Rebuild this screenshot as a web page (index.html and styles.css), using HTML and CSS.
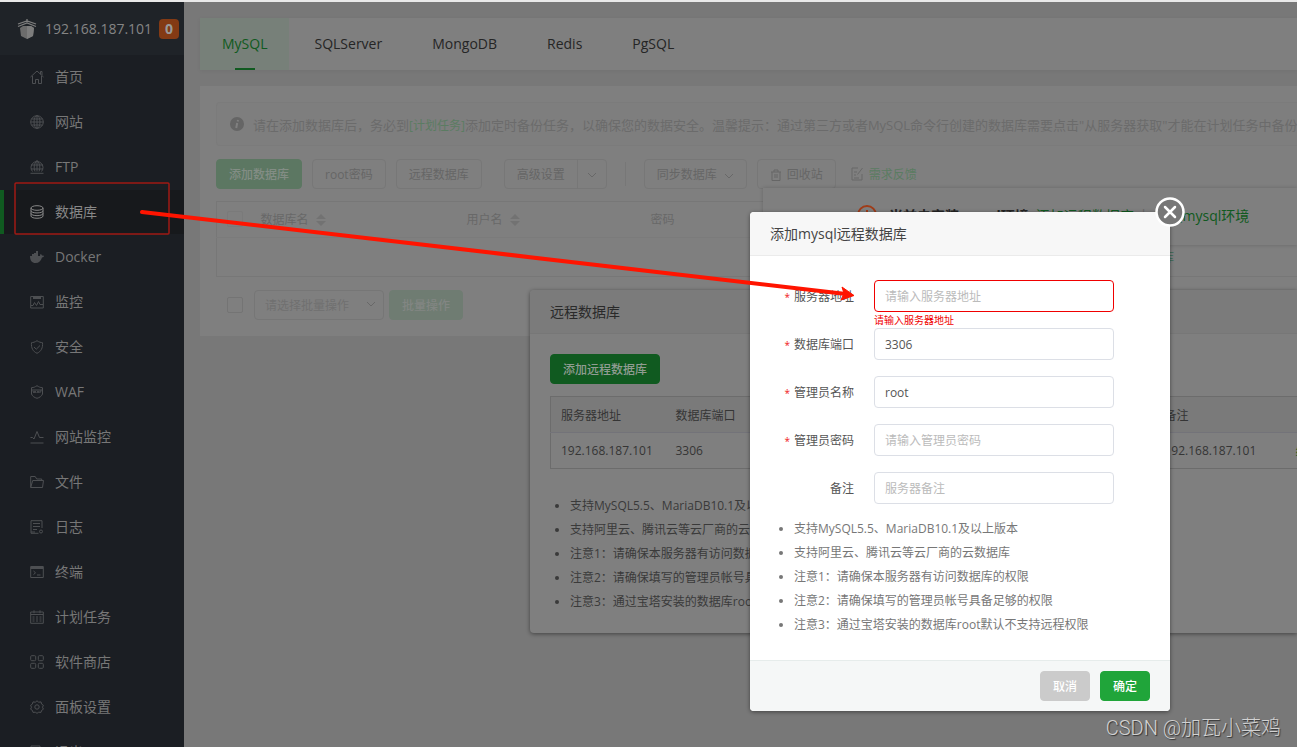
FILE: index.html
```html
<!DOCTYPE html>
<html lang="zh-CN">
<head>
<meta charset="utf-8">
<title>数据库</title>
<link rel="stylesheet" href="styles.css">
</head>
<body>
<div class="app">
  <aside class="sidebar">
    <div class="brand">
      <svg class="brand-logo" viewBox="0 0 20 20"><path d="M10 0v3M1 5l9-3 9 3M1 7.500l9-3.500 9 3.500" fill="none" stroke="#7d7d7d" stroke-width="1.300"/><path d="M3 9l3-2h8l3 2-1 8-6 3-6-3z" fill="#6c6c6c"/><path d="M10 7h4l3 2-1 8-6 3z" fill="#7d7d7d"/></svg>
      <span class="brand-ip">192.168.187.101</span>
      <span class="brand-badge">0</span>
    </div>
    <nav class="menu">
      <a class="menu-item" href="#"><svg class="icon" viewBox="0 0 14 14"><path d="M.5 7L7 1l6.500 6M2.500 6v7.500h3v-4h3v4h3V6M10.500 4V1.500h1.500V5"/></svg>首页</a>
      <a class="menu-item" href="#"><svg class="icon" viewBox="0 0 14 14"><circle cx="7" cy="7" r="6.300"/><ellipse cx="7" cy="7" rx="3" ry="6.300"/><path d="M7 .7v12.600M.7 7h12.600M1.500 4h11M1.500 10h11"/></svg>网站</a>
      <a class="menu-item" href="#"><svg class="icon" viewBox="0 0 14 14"><path d="M2.500 11.500a6 6 0 1 1 9 0M5 11.500c-1.500-4-1-8 2-11 3 3 3.500 7 2 11M7 .5v11M1 5h12M1 9h12M.5 13.300h13"/></svg>FTP</a>
      <a class="menu-item active" href="#"><svg class="icon" viewBox="0 0 14 14"><ellipse cx="7" cy="3" rx="6" ry="2.300"/><path d="M1 3v8c0 3 12 3 12 0V3M1 5.700c0 3 12 3 12 0M1 8.400c0 3 12 3 12 0"/></svg>数据库</a>
      <a class="menu-item" href="#"><svg class="icon solid" viewBox="0 0 14 14"><path d="M0 6h2V4h2V3h2V1h2v5h2c0-2 1-2 1-2l1 1.500 2 .2c0 1-1 1.500-2 1.800C11 11 9 13 5.500 13 2 13 0 10.500 0 6z"/></svg>Docker</a>
      <a class="menu-item" href="#"><svg class="icon" viewBox="0 0 14 14"><path d="M.7 1.500h12.600v11.500H.7zM3 2.500h8M3 3.500h8M1 10.500h2l1.500-3 2 3 2-4 1.500 3h3"/></svg>监控</a>
      <a class="menu-item" href="#"><svg class="icon" viewBox="0 0 14 14"><path d="M7 .7c2 1.500 4 1.800 5.500 2C13 8 11 11.500 7 13.300 3 11.500 1 8 1.500 2.700 3 2.500 5 2.200 7 .7zM4 7l2.300 2.200L10 5.500"/></svg>安全</a>
      <a class="menu-item" href="#"><svg class="icon" viewBox="0 0 14 14"><path d="M1.500 5V2.700C4 2.500 5 2 7 .7c2 1.300 3 1.800 5.500 2V5M1.500 9c1 2.500 3 3.500 5.500 4.300C9.500 12.500 11.500 11.500 12.500 9M1.500 5h11M3 6l1 2 1-2 1 2M7 8l1-2 1 2M10 8V6h1.500M1.500 5v4M12.500 5v4"/></svg>WAF</a>
      <a class="menu-item" href="#"><svg class="icon" viewBox="0 0 14 14"><path d="M.5 7.500h2l1.500 1.500L7 1.500l2.500 6h4M.5 13h13"/></svg>网站监控</a>
      <a class="menu-item" href="#"><svg class="icon" viewBox="0 0 14 14"><path d="M.7 12.500v-11h4.500l1.500 2.500h5v1.500M.7 12.500l2-7h10.800l-1 7z"/></svg>文件</a>
      <a class="menu-item" href="#"><svg class="icon" viewBox="0 0 14 14"><path d="M8.500 13.300H1V.7h11V8M3 3.500h7M3 6.500h7M3 9.500h4M1 12h4"/><circle cx="11" cy="11.500" r="1.500"/></svg>日志</a>
      <a class="menu-item" href="#"><svg class="icon" viewBox="0 0 14 14"><path d="M.7 1.500h12.600v11H.7zM.7 2.500h12.600M.7 3.500h12.600M3.500 6l2 1.800-2 1.800M7 10h3.500"/></svg>终端</a>
      <a class="menu-item" href="#"><svg class="icon" viewBox="0 0 14 14"><path d="M.7 2h12.600v11.300H.7zM.7 4.500h12.600M4 .3v3M10 .3v3M2.500 7h2M6 7h2M9.500 7h2M2.500 9h2M6 9h2M9.500 9h2M2.500 11h2M6 11h2M9.500 11h2"/></svg>计划任务</a>
      <a class="menu-item" href="#"><svg class="icon" viewBox="0 0 14 14"><rect x=".7" y=".7" width="5" height="5" rx="1"/><rect x="8.300" y=".7" width="5" height="5" rx="1"/><rect x=".7" y="8.300" width="5" height="5" rx="1"/><rect x="8.300" y="8.300" width="5" height="5" rx="1"/></svg>软件商店</a>
      <a class="menu-item" href="#"><svg class="icon" viewBox="0 0 14 14"><path d="M5.300 2.200L7 .8l1.700 1.400 2.300-.3.600 2.200 1.800 1.200-.9 1.900.9 2-1.800 1.200-.6 2-2.300-.2L7 13.300l-1.700-1.100-2.300.2-.6-2L.6 9.200l.9-2-.9-1.900 1.800-1.200.6-2.200z"/><circle cx="7" cy="7" r="2.200"/></svg>面板设置</a>
      <a class="menu-item" href="#"><svg class="icon" viewBox="0 0 14 14"><path d="M10 4V1H1v12h9v-3M5 7h8"/></svg>退出</a>
    </nav>
  </aside>

  <main class="main">
    <nav class="tabs">
      <a class="tab active" href="#">MySQL</a>
      <a class="tab" href="#">SQLServer</a>
      <a class="tab" href="#">MongoDB</a>
      <a class="tab" href="#">Redis</a>
      <a class="tab" href="#">PgSQL</a>
    </nav>
    <section class="panel">
      <p class="notice">
        <svg class="notice-icon" viewBox="0 0 14 14"><circle cx="7" cy="7" r="7" fill="#656565"/><path d="M8 3L7.700 4.500M7.200 6l-1 5" stroke="#808080" stroke-width="2"/></svg>
        <span>请在添加数据库后，务必到<a class="notice-link" href="#">[计划任务]</a>添加定时备份任务，以确保您的数据安全。温馨提示：通过第三方或者MySQL命令行创建的数据库需要点击"从服务器获取"才能在计划任务中备份</span>
      </p>
      <div class="toolbar">
        <button class="btn btn-green">添加数据库</button>
        <button class="btn">root密码</button>
        <button class="btn">远程数据库</button>
        <div class="split">
          <button class="btn split-main">高级设置</button>
          <button class="btn split-arrow" aria-label="更多"><svg class="chevron" viewBox="0 0 10 6"><path d="M1 1l4 4 4-4"/></svg></button>
        </div>
        <span class="divider"></span>
        <button class="btn sync">同步数据库<svg class="chevron" viewBox="0 0 10 6"><path d="M1 1l4 4 4-4"/></svg></button>
        <button class="btn recycle"><svg class="tool-icon" viewBox="0 0 12 12"><path d="M1 3h10M4 3V1h4v2M2 3v8.500h8V3M5 5v4M7 5v4"/></svg>回收站</button>
        <a class="feedback" href="#"><svg class="feedback-icon" viewBox="0 0 14 14"><path d="M8 1H2v12h10V7M4 5h3M4 8h2M7.500 7.500L12.500 1M4 11h5"/></svg>需求反馈</a>
      </div>
      <table class="db-table">
        <colgroup><col class="c-check"><col class="c-name"><col class="c-user"><col></colgroup>
        <thead>
          <tr>
            <th><input class="check faint" type="checkbox" aria-label="全选"></th>
            <th>数据库名<svg class="sort" viewBox="0 0 10 12"><path d="M5 0l5 5H0zM5 12l5-5H0z"/></svg></th>
            <th>用户名<svg class="sort" viewBox="0 0 10 12"><path d="M5 0l5 5H0zM5 12l5-5H0z"/></svg></th>
            <th>密码</th>
          </tr>
        </thead>
        <tbody><tr><td colspan="4" class="empty"><a class="empty-link" href="#">添加数据库</a></td></tr></tbody>
      </table>
      <div class="batch">
        <input class="check" type="checkbox" aria-label="选择全部">
        <div class="select-wrap">
          <select class="select" aria-label="批量操作"><option>请选择批量操作</option></select>
          <svg class="chevron select-chevron" viewBox="0 0 10 6"><path d="M1 1l4 4 4-4"/></svg>
        </div>
        <button class="btn btn-pale">批量操作</button>
      </div>
    </section>
  </main>

  <div class="env-tip">
    <svg class="env-icon" viewBox="0 0 20 20"><circle cx="10" cy="10" r="9"/><path d="M10 5v6M10 13v2"/></svg>
    <strong>当前未安装mysql环境,</strong>
    <a class="env-link" href="#">添加远程数据库</a>
    <span class="env-sep">|</span>
    <a class="env-link" href="#">安装mysql环境</a>
  </div>

  <section class="dialog remote">
    <h2 class="dialog-title">远程数据库</h2>
    <div class="remote-body">
      <button class="btn btn-add">添加远程数据库</button>
      <table class="remote-table">
        <colgroup><col class="r-addr"><col class="r-port"><col class="r-user"><col class="r-pass"><col class="r-note"><col></colgroup>
        <thead><tr><th>服务器地址</th><th>数据库端口</th><th>管理员名称</th><th>管理员密码</th><th>备注</th><th></th></tr></thead>
        <tbody><tr><td>192.168.187.101</td><td>3306</td><td></td><td></td><td>192.168.187.101</td><td><a class="env-link" href="#">编辑</a></td></tr></tbody>
      </table>
      <ul class="tips">
        <li>支持MySQL5.5、MariaDB10.1及以上版本</li>
        <li>支持阿里云、腾讯云等云厂商的云数据库</li>
        <li>注意1：请确保本服务器有访问数据库的权限</li>
        <li>注意2：请确保填写的管理员帐号具备足够的权限</li>
        <li>注意3：通过宝塔安装的数据库root默认不支持远程权限</li>
      </ul>
    </div>
  </section>

  <form class="dialog add">
    <h2 class="dialog-title">添加mysql远程数据库</h2>
    <button class="close" type="button" aria-label="关闭"><svg viewBox="0 0 30 30"><circle cx="15" cy="15" r="13.500" fill="#777" stroke="#fff" stroke-width="2.500"/><path d="M10 10l10 10M20 10L10 20" stroke="#fff" stroke-width="2.500" stroke-linecap="round"/></svg></button>
    <div class="fields">
      <div class="field"><label class="label required" for="host">服务器地址</label><input class="input invalid" id="host" placeholder="请输入服务器地址"><span class="error">请输入服务器地址</span></div>
      <div class="field"><label class="label required" for="port">数据库端口</label><input class="input" id="port" value="3306"></div>
      <div class="field"><label class="label required" for="user">管理员名称</label><input class="input" id="user" value="root"></div>
      <div class="field"><label class="label required" for="pass">管理员密码</label><input class="input" id="pass" placeholder="请输入管理员密码"></div>
      <div class="field"><label class="label" for="note">备注</label><input class="input" id="note" placeholder="服务器备注"></div>
    </div>
    <ul class="tips">
      <li>支持MySQL5.5、MariaDB10.1及以上版本</li>
      <li>支持阿里云、腾讯云等云厂商的云数据库</li>
      <li>注意1：请确保本服务器有访问数据库的权限</li>
      <li>注意2：请确保填写的管理员帐号具备足够的权限</li>
      <li>注意3：通过宝塔安装的数据库root默认不支持远程权限</li>
    </ul>
    <div class="actions">
      <button class="btn btn-cancel" type="button">取消</button>
      <button class="btn btn-ok" type="button">确定</button>
    </div>
  </form>

  <svg class="marks" width="870" height="310" viewBox="0 0 870 310">
    <rect x="15" y="183" width="154" height="51" rx="1" fill="none" stroke="#a01a14" stroke-width="1.500"/>
    <path d="M142 212L846 294" stroke="#ff1400" stroke-width="4" stroke-linecap="round"/>
    <path d="M854 295.500L842 287l2 6.500-3 6.500z" fill="#ff1400" stroke="#ff1400"/>
  </svg>
  <div class="watermark">CSDN @加瓦小菜鸡</div>
</div>
</body>
</html>
```
FILE: styles.css
```css
* { box-sizing: border-box; }
body {
  margin: 0;
  font-family: "Open Sans", "Noto Sans CJK SC", sans-serif;
  font-size: 12px;
  color: #353535;
  background: #787878;
}
a { color: inherit; text-decoration: none; }
button, input, select { font: inherit; }
h2, p, ul { margin: 0; padding: 0; }
svg { flex: none; fill: none; }

.app {
  position: relative;
  display: flex;
  height: 100vh;
  overflow: hidden;
  border-top: 2px solid #e9e9e9;
}

/* Sidebar */
.sidebar { flex: none; width: 184px; background: #1b1e23; overflow: hidden; }
.brand {
  display: flex;
  align-items: center;
  height: 53px;
  padding: 0 5px 0 17px;
  background: #1f2328;
  color: #858585;
  font-size: 14px;
}
.brand-logo { width: 20px; height: 20px; }
.brand-ip { margin-left: 8px; flex: 1; }
.brand-badge {
  width: 20px;
  height: 20px;
  border-radius: 4px;
  background: #833a14;
  color: #999;
  font-weight: 700;
  line-height: 20px;
  text-align: center;
}
.menu { display: flex; flex-direction: column; gap: 1px; }
.menu-item {
  display: flex;
  align-items: center;
  gap: 11px;
  flex: none;
  height: 44px;
  padding-left: 30px;
  color: #777;
  font-size: 14px;
  line-height: 20px;
}
.menu-item.active {
  padding-left: 26px;
  border-left: 4px solid #105a20;
  background: #17191c;
  color: #888;
}
.icon { width: 14px; height: 14px; stroke: #4d4f52; }
.icon.solid { fill: #4d4f52; stroke: none; }
.active .icon { stroke: #888; }

/* Page content */
.main { flex: 1; min-width: 0; padding: 16px 0 0 16px; overflow: hidden; }
.tabs { display: flex; height: 52px; background: #7f7f7f; box-shadow: 0 1px 4px rgba(0, 0, 0, .06); }
.tab {
  display: flex;
  align-items: center;
  padding: 0 25px 2px;
  font-size: 14px;
  color: #252525;
}
.tab.active {
  position: relative;
  padding: 0 22px 2px;
  background: #778079;
  color: #105a20;
}
.tab.active::after {
  content: "";
  position: absolute;
  left: 50%;
  bottom: 0;
  width: 20px;
  height: 2px;
  margin-left: -10px;
  background: #105a20;
}
.panel { margin-top: 16px; padding: 16px 0 16px 16px; background: #7f7f7f; }
.notice {
  display: flex;
  align-items: center;
  gap: 9px;
  height: 44px;
  padding-left: 13px;
  border: 1px solid #7b7b7b;
  border-right: 0;
  border-radius: 4px 0 0 4px;
  background: #7e7e7e;
  color: #6b6b6b;
  font-size: 13px;
  white-space: nowrap;
}
.notice-icon { width: 14px; height: 14px; }
.notice-link { color: #5b7c62; font-size: 12px; }

.btn {
  height: 30px;
  padding: 1px 12px 0;
  border: 1px solid #777;
  border-radius: 4px;
  background: transparent;
  color: #666;
  line-height: 28px;
  white-space: nowrap;
}
.btn-green { border-color: #5c7762; background: #5c7762; color: #838d85; font-weight: 500; }
.btn-pale { border-color: #6f7c72; background: #6f7c72; color: #828683; font-weight: 500; }
.toolbar { display: flex; align-items: center; gap: 10px; margin-top: 13px; }
.split { display: flex; margin-left: 12px; }
.split-main { border-radius: 4px 0 0 4px; }
.split-arrow { width: 30px; margin-left: -1px; padding: 0 9px; border-radius: 0 4px 4px 0; }
.chevron { width: 10px; height: 6px; stroke: #686868; }
.divider { width: 1px; height: 24px; margin: 0 8px; background: #777; }
.sync .chevron { margin-left: 7px; vertical-align: middle; }
.recycle { display: flex; align-items: center; gap: 5px; }
.tool-icon { width: 12px; height: 12px; stroke: #666; }
.feedback { display: flex; align-items: center; gap: 5px; margin-left: 4px; color: #5b7c62; }
.feedback-icon { width: 14px; height: 14px; stroke: #686868; }

table { width: 100%; border-collapse: collapse; table-layout: fixed; }
th, td { padding: 0 10px; text-align: left; font-weight: 400; white-space: nowrap; }
.db-table { margin-top: 12px; border: 1px solid #777; border-right: 0; color: #686868; }
.db-table th { height: 36px; padding-bottom: 2px; border-bottom: 1px solid #7b7b7b; }
.c-check { width: 34px; }
.c-name { width: 206px; }
.c-user { width: 184px; }
.empty { height: 39px; }
.db-table .empty { padding-left: 897px; }
.empty-link { color: #3c6b55; }
.sort { width: 10px; height: 12px; margin-left: 7px; vertical-align: -2px; fill: #727272; }
.check {
  appearance: none;
  display: block;
  width: 16px;
  height: 16px;
  margin: 0;
  border: 1px solid #747474;
  border-radius: 2px;
}
.check.faint { border-color: #7a7a7a; }
.batch { display: flex; align-items: center; margin-top: 13px; padding-left: 11px; }
.select-wrap { position: relative; margin: 0 5px 0 11px; }
.select {
  appearance: none;
  width: 130px;
  height: 30px;
  padding: 0 10px;
  border: 1px solid #767676;
  border-radius: 4px;
  background: transparent;
  color: #707070;
}
.select-chevron { position: absolute; right: 8px; top: 11px; }

/* Environment reminder */
.env-tip {
  position: absolute;
  top: 186px;
  left: 763px;
  right: 0;
  display: flex;
  align-items: center;
  height: 57px;
  padding: 0 0 4px 94px;
  background: #7f7f7f;
  box-shadow: 0 0 4px rgba(0, 0, 0, .2);
  color: #252525;
  font-size: 14px;
  white-space: nowrap;
}
.env-icon { width: 20px; height: 20px; margin-right: 12px; stroke: #a03c18; stroke-width: 2; }
.env-link { color: #105a20; }
.env-tip strong { margin-right: 3px; }
.env-sep { margin: 0 7px 0 6px; color: #666; }

/* Dialogs */
.dialog { position: absolute; border-radius: 4px; box-shadow: 0 1px 4px rgba(0, 0, 0, .45); }
.dialog-title {
  height: 44px;
  padding: 0 20px;
  border-bottom: 1px solid #777;
  font-size: 14px;
  font-weight: 400;
  line-height: 43px;
}
.tips { list-style: disc; line-height: 24px; }
.remote { top: 288px; left: 530px; right: 0; border-radius: 4px 0 0 4px; background: #7f7f7f; overflow: hidden; }
.remote .dialog-title { background: #7b7b7b; color: #2a2a2a; }
.remote-body { padding: 20px 0 19px 20px; }
.btn-add { border-color: #105a20; background: #105a20; color: #909c92; font-weight: 500; display: block; }
.remote-table { margin-top: 12px; border: 1px solid #6c6c6c; border-right: 0; }
.remote-table th { height: 36px; background: #7a7a7a; border-bottom: 1px solid #737379; }
.remote-table td { height: 36px; }
.r-addr, .r-port { width: 115px; }
.r-user, .r-pass { width: 187px; }
.r-note { width: 131px; }
.remote .tips { margin-top: 25px; padding-left: 20px; color: #3a3a3a; white-space: nowrap; }

.add { top: 210px; left: 750px; width: 420px; background: #fff; }
.add .dialog-title { border-radius: 4px 4px 0 0; border-color: #ebebeb; background: #f7f7f7; color: #444; }
.close { position: absolute; top: -15px; right: -15px; width: 30px; height: 30px; padding: 0; border: 0; background: none; }
.close svg { display: block; }
.fields { display: grid; gap: 16px; padding-top: 24px; }
.field { position: relative; display: flex; align-items: center; gap: 20px; }
.label { width: 104px; text-align: right; color: #555; }
.required::before { content: "*"; margin-right: 4px; color: #f02020; font-size: 10px; }
.input {
  width: 240px;
  height: 32px;
  padding: 0 10px;
  border: 1px solid #dcdfe6;
  border-radius: 4px;
  outline: 0;
  background: #fff;
  color: #555;
}
.input::placeholder { color: #bbb; }
.input.invalid { border-color: #f00000; }
.error { position: absolute; top: 32px; left: 124px; color: #f00000; font-size: 10px; line-height: 16px; }
.add .tips { margin-top: 13px; padding: 0 20px 23px 44px; color: #777; }
.actions {
  display: flex;
  justify-content: flex-end;
  gap: 10px;
  padding: 10px 20px;
  border-top: 1px solid #e6eceb;
  border-radius: 0 0 4px 4px;
  background: #f5f7f7;
}
.btn-cancel { border-color: #cbcbcb; background: #cbcbcb; color: #fff; font-weight: 500; }
.btn-ok { border-color: #20a53a; background: #20a53a; color: #fff; font-weight: 500; }

/* Annotation layer */
.marks { position: absolute; top: -2px; left: 0; pointer-events: none; }
.watermark {
  position: absolute;
  right: 16px;
  bottom: 5px;
  color: #d2d2d2;
  font-family: "Roboto", "Noto Sans CJK SC", sans-serif;
  font-size: 20px;
  font-weight: 300;
  line-height: 28px;
  text-shadow: 1px 1px 1px #333;
  white-space: nowrap;
}
```
